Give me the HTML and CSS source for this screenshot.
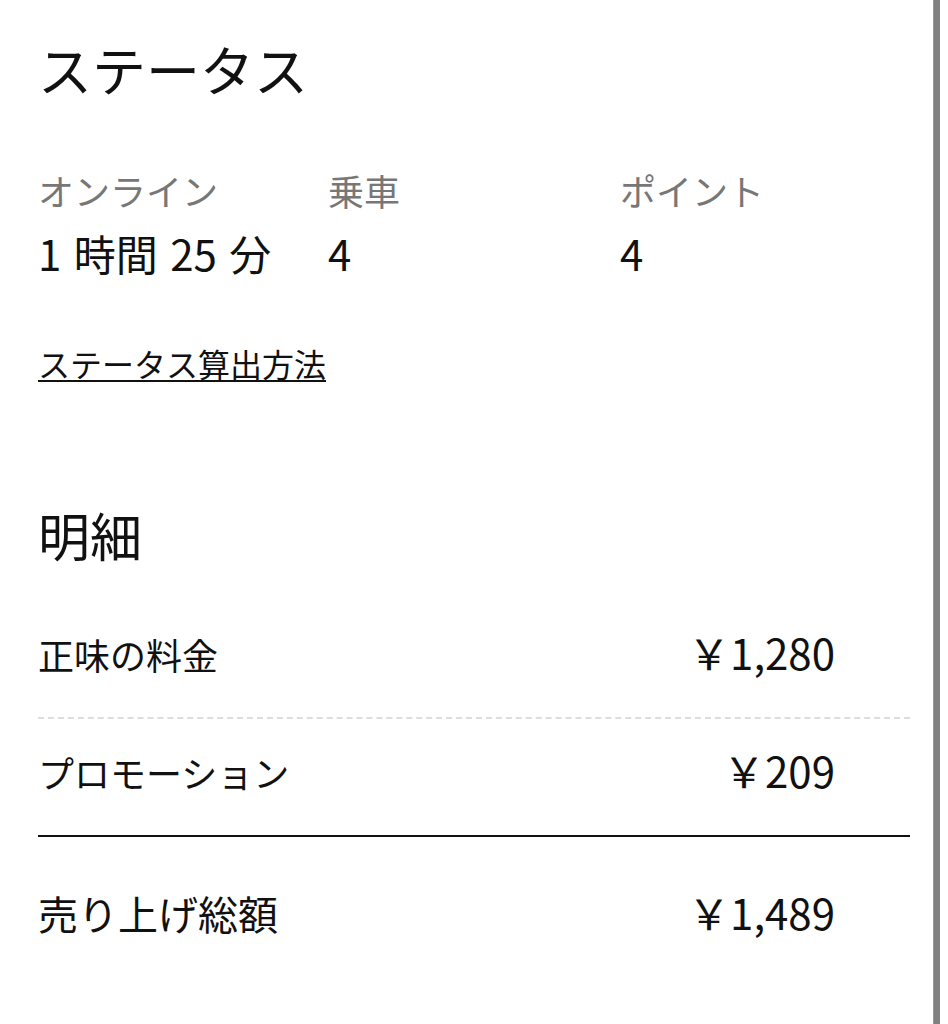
FILE: index.html
```html
<!DOCTYPE html>
<html lang="ja">
<head>
<meta charset="utf-8">
<link rel="stylesheet" href="styles.css">
</head>
<body>
<div class="frame">
  <main class="content">
    <h1 class="title">ステータス</h1>
    <div class="stats">
      <div class="stat">
        <div class="stat-label">オンライン</div>
        <div class="stat-value">1 時間 25 分</div>
      </div>
      <div class="stat">
        <div class="stat-label">乗車</div>
        <div class="stat-value">4</div>
      </div>
      <div class="stat">
        <div class="stat-label">ポイント</div>
        <div class="stat-value">4</div>
      </div>
    </div>
    <a class="link" href="#">ステータス算出方法</a>
    <h2 class="section">明細</h2>
    <div class="rows">
      <div class="row net">
        <span class="row-label">正味の料金</span>
        <span class="row-amount">￥1,280</span>
      </div>
      <div class="row promo">
        <span class="row-label">プロモーション</span>
        <span class="row-amount">￥209</span>
      </div>
      <div class="row total">
        <span class="row-label">売り上げ総額</span>
        <span class="row-amount">￥1,489</span>
      </div>
    </div>
  </main>
  <div class="scrollbar"></div>
</div>
</body>
</html>
```

FILE: styles.css
```css
html, body {
  margin: 0;
  padding: 0;
  background: #ffffff;
}
body {
  font-family: "Noto Sans CJK JP", "Noto Sans", sans-serif;
  color: #111111;
}
.frame {
  display: flex;
  width: 948px;
  height: 1024px;
  overflow: hidden;
}
.content {
  flex: 1;
  padding: 42px 23px 0 38px;
}
.scrollbar {
  width: 7px;
  margin-right: 8px;
  background: #808080;
  border-left: 1px solid #9a9a9a;
  box-sizing: border-box;
}
.title {
  margin: 0;
  font-size: 54px;
  font-weight: 400;
  line-height: 54px;
}
.stats {
  display: grid;
  grid-template-columns: 290px 292px 1fr;
  margin-top: 74px;
}
.stat-label {
  font-size: 36px;
  line-height: 40px;
  color: #777777;
}
.stat-value {
  font-size: 42px;
  line-height: 46px;
  margin-top: 20px;
  color: #111111;
  word-spacing: 3px;
}
.link {
  display: inline-block;
  margin-top: 67px;
  font-size: 32px;
  line-height: 40px;
  color: #111111;
  text-decoration: underline;
  text-underline-offset: 3px;
  text-decoration-thickness: 2px;
}
.section {
  margin: 124px 0 0;
  font-size: 52px;
  font-weight: 400;
  line-height: 56px;
}
.rows {
  margin-top: 29px;
}
.row {
  display: flex;
  justify-content: space-between;
  align-items: baseline;
}
.row.net {
  padding: 38px 0 41px;
  border-bottom: 2px dashed #dddddd;
}
.row.promo {
  padding: 29px 0 41px;
  border-bottom: 2px solid #111111;
}
.row.total {
  padding: 53px 0 0;
}
.row-label {
  font-size: 36px;
  line-height: 44px;
}
.row-amount {
  font-size: 42px;
  line-height: 44px;
  margin-right: 75px;
}
.row.total .row-label {
  font-size: 40px;
}
```
